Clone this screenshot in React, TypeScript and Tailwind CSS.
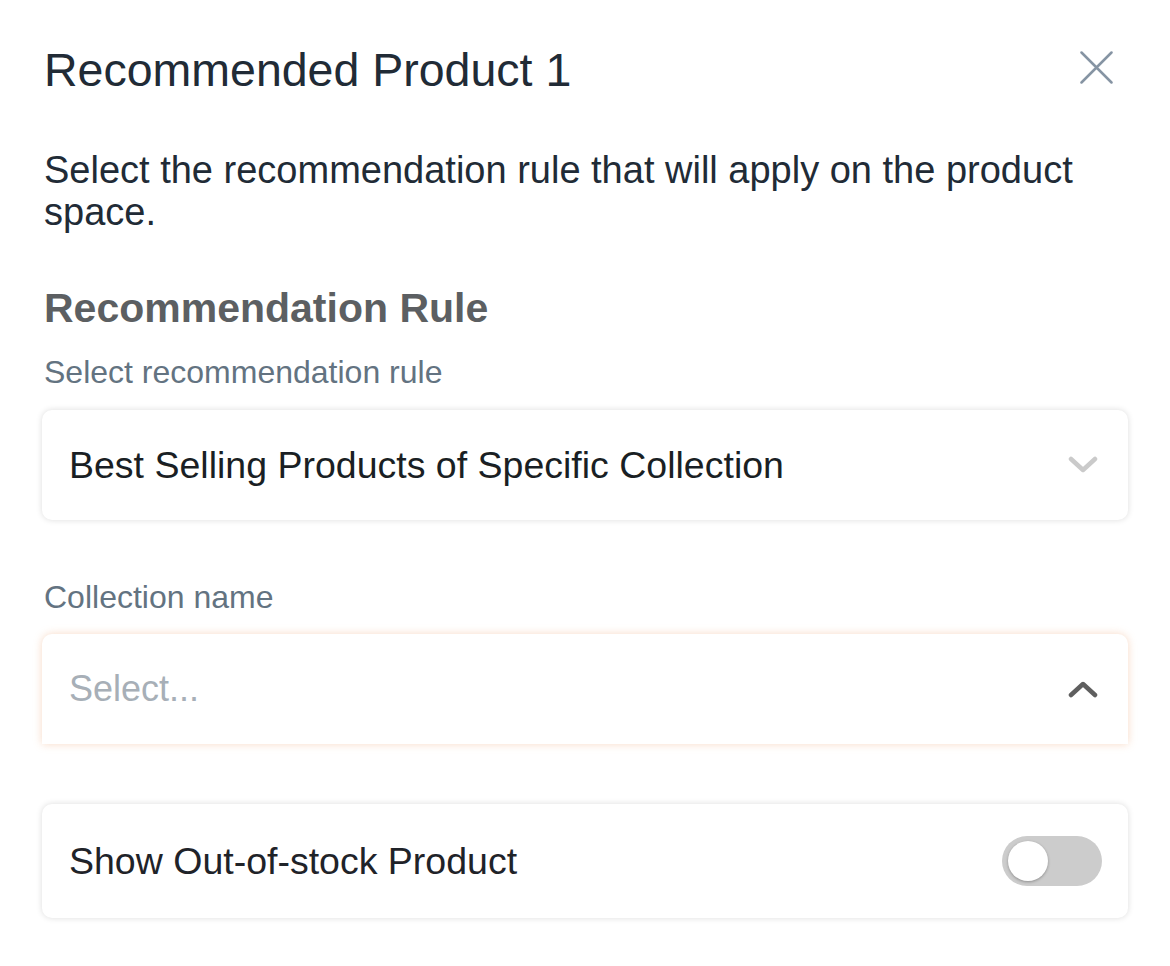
import { useState } from "react";

function ChevronIcon({ up, className }: { up?: boolean; className?: string }) {
  return (
    <svg width="30" height="18" viewBox="0 0 30 18" fill="none" className={className}>
      <path
        d={up ? "M3 15 L15 4 L27 15" : "M3 3 L15 14 L27 3"}
        stroke="currentColor"
        strokeWidth="4.5"
        strokeLinecap="round"
        strokeLinejoin="round"
      />
    </svg>
  );
}

function CloseIcon() {
  return (
    <svg width="33" height="33" viewBox="0 0 33 33" fill="none" className="-mt-[6px] text-[#8694a3]">
      <path d="M1.5 1.5 L31.5 31.5 M31.5 1.5 L1.5 31.5" stroke="currentColor" strokeWidth="2.5" strokeLinecap="round" />
    </svg>
  );
}

export default function App() {
  const [showOutOfStock, setShowOutOfStock] = useState(false);

  return (
    <div className="min-h-screen bg-white px-[42px] pt-[39px] font-['Liberation_Sans','Arial',sans-serif]">
      <div className="flex items-center justify-between pl-[2px] pr-[15px]">
        <h1 className="text-[46.5px] leading-[62px] text-[#212b36]">Recommended Product 1</h1>
        <CloseIcon />
      </div>

      <p className="mt-[48px] pl-[2px] text-[38px] leading-[42px] text-[#212b36]">
        Select the recommendation rule that will apply on the product space.
      </p>

      <h2 className="mt-[51px] pl-[2px] text-[41px] font-bold leading-[48px] text-[#5c5f62]">
        Recommendation Rule
      </h2>

      <label className="mt-[21px] block pl-[2px] text-[32px] leading-[38px] text-[#637381]">
        Select recommendation rule
      </label>

      <div className="mt-[19px] flex h-[110px] items-center justify-between rounded-[10px] bg-white pl-[27px] pr-[30px] shadow-[0_0_6px_rgba(0,0,0,0.14)]">
        <span className="text-[37.5px] text-[#1a1f24]">Best Selling Products of Specific Collection</span>
        <ChevronIcon className="text-[#cacaca]" />
      </div>

      <label className="mt-[58px] block pl-[2px] text-[32px] leading-[38px] text-[#637381]">
        Collection name
      </label>

      <div className="mt-[18px] flex h-[110px] items-center justify-between rounded-t-[10px] bg-white pl-[27px] pr-[30px] shadow-[0_0_8px_rgba(238,160,110,0.4)]">
        <span className="text-[36px] text-[#a7afb7]">Select...</span>
        <ChevronIcon up className="text-[#5f5f5f]" />
      </div>

      <div className="mt-[60px] flex h-[114px] items-center justify-between rounded-[10px] bg-white pl-[27px] pr-[26px] shadow-[0_0_6px_rgba(0,0,0,0.14)]">
        <span className="text-[37.5px] text-[#1f2329]">Show Out-of-stock Product</span>
        <button
          onClick={() => setShowOutOfStock(!showOutOfStock)}
          className={`flex h-[50px] w-[100px] items-center rounded-full px-[6px] ${
            showOutOfStock ? "justify-end bg-[#47c1bf]" : "justify-start bg-[#cccccc]"
          }`}
        >
          <span className="h-[40px] w-[40px] rounded-full bg-white shadow-[0_1px_3px_rgba(0,0,0,0.3)]" />
        </button>
      </div>
    </div>
  );
}
